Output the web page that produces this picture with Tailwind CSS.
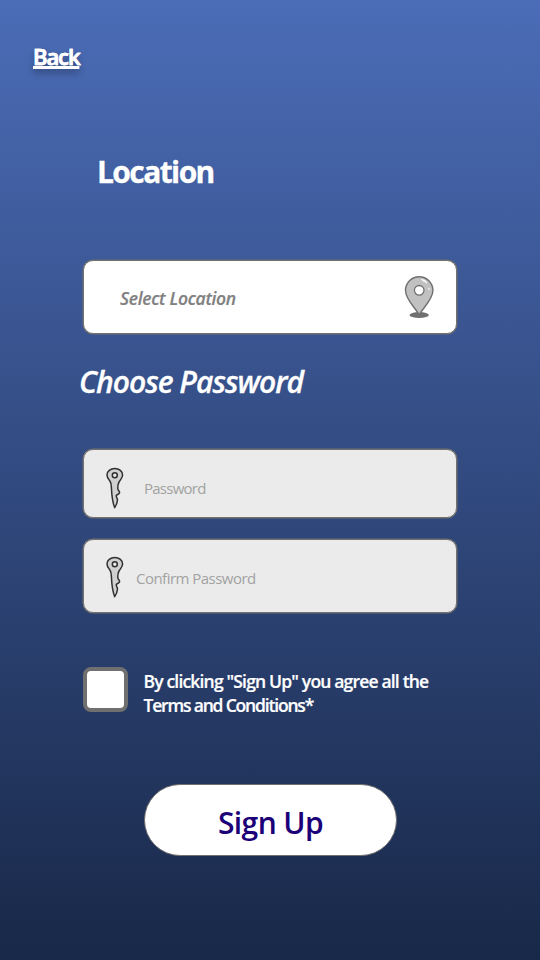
<!DOCTYPE html>
<html lang="en">
<head>
<meta charset="utf-8">
<title>Sign Up</title>
<script src="https://cdn.jsdelivr.net/npm/@tailwindcss/browser@4"></script>
</head>
<body class="font-['Open_Sans','Noto_Sans',sans-serif]">
<svg class="hidden">
  <symbol id="key" viewBox="0 0 18 42">
    <path d="M8.800 1.600C4.400 1.600 1 4.400 1 8c0 2.600 1.600 4.200 2.900 6 1.400 1.900 1.400 3.500 1.500 6.500.3 7.500 1.200 15 3.300 20.200 1.500-2.200 2.600-5.200 2.800-7.700.1-1.800-1.600-3-1.300-4.300.3-1.300 3.200-1.200 3.400-3 .1-1.600-1.800-2.300-1.800-4.200 0-3.200-.1-4.600 1.500-7 1.500-2.300 3.300-3.700 3.300-6.500 0-3.600-3.400-6.400-7.800-6.400Z" fill="#d0d0d0" stroke="#303030" stroke-width="1.500" stroke-linejoin="round"/>
    <circle cx="8.800" cy="8.300" r="2.500" fill="#e8e8e8" stroke="#303030" stroke-width="1.500"/>
  </symbol>
</svg>
<main class="flex h-[960px] w-[540px] flex-col bg-[linear-gradient(to_bottom,#4b6cb7,#182848)] text-white">
  <a class="mt-[41px] ml-[33px] flex h-[30px] w-[48px] items-center text-[22px] font-semibold tracking-[-1.100px] whitespace-nowrap underline decoration-[2.500px] underline-offset-1 [-webkit-text-stroke:0.6px_white] [text-shadow:0_4px_7px_#0005]">Back</a>
  <h1 class="mt-[80px] ml-[97px] flex h-10 items-center text-[30px] font-bold tracking-[-1.600px] whitespace-nowrap [-webkit-text-stroke:0.3px_white]">Location</h1>
  <div class="mt-[69px] ml-[83px] flex h-[74px] w-[374px] items-center justify-between rounded-[10px] border border-[#707070] bg-white pr-[22px] pl-[36px] shadow-[0_0_0_0.5px_#707070]">
    <span class="pt-[3px] text-[17.500px] font-semibold tracking-[-0.3px] whitespace-nowrap text-[#808080] italic [-webkit-text-stroke:0.2px_#808080]">Select Location</span>
    <svg class="h-[44px] w-[30px]" viewBox="0 0 30 44">
      <ellipse cx="15.200" cy="40" rx="9.700" ry="3" fill="#707070"/>
      <path d="M15.200 40C13 34.500 1.500 25 1.500 15.500a13.700 13.700 0 0 1 27.400 0C28.900 25 17.400 34.500 15.200 40Z" fill="#c1c1c1" stroke="#707070" stroke-width="1.400"/>
      <circle cx="15.200" cy="15.300" r="4.800" fill="#fff" stroke="#707070" stroke-width="1.300"/>
      <path d="M17.500 4.500c2.500.2 4.700 1.500 5.500 3.500-2-1.200-3.800-1.800-5.500-3.500Z" fill="#fff5f5" stroke="#fff5f5"/>
      <circle cx="25" cy="14" r="1" fill="#f0e8e8"/>
    </svg>
  </div>
  <h2 class="mt-[27px] ml-[79px] flex h-10 items-center text-[30px] font-semibold tracking-[-1px] whitespace-nowrap italic [-webkit-text-stroke:0.3px_white]">Choose Password</h2>
  <div class="mt-[48px] ml-[83px] flex h-[69px] w-[374px] items-center rounded-[10px] border border-[#707070] bg-[#ebebeb] pl-[22px] shadow-[0_0_0_0.5px_#707070]">
    <svg class="mt-[9px] h-[42px] w-[18px]"><use href="#key"/></svg>
    <span class="mt-[9px] ml-[20px] text-[15px] tracking-[-0.750px] whitespace-nowrap text-[#a2a2a2]">Password</span>
  </div>
  <div class="mt-[21px] ml-[83px] flex h-[74px] w-[374px] items-center rounded-[10px] border border-[#707070] bg-[#ebebeb] pl-[22px] shadow-[0_0_0_0.5px_#707070]">
    <svg class="mt-px h-[42px] w-[18px]"><use href="#key"/></svg>
    <span class="mt-[4px] ml-[12px] text-[15px] tracking-[-0.520px] whitespace-nowrap text-[#a2a2a2]">Confirm Password</span>
  </div>
  <div class="mt-[54px] ml-[82.500px] flex h-[50px] items-start gap-[16px]">
    <span class="h-[45px] w-[45px] rounded-[8px] border-4 border-[#707070] bg-white"></span>
    <div class="mt-[2px] text-[17.500px] leading-[24px] font-semibold whitespace-nowrap [-webkit-text-stroke:0.2px_white]">
      <p class="tracking-[-0.820px]">By clicking "Sign Up" you agree all the</p>
      <p class="tracking-[-1.180px]">Terms and Conditions*</p>
    </div>
  </div>
  <button class="mt-[67px] ml-[144px] flex h-[72px] w-[253px] items-center justify-center rounded-full border border-[#707070] bg-white pt-[4px] text-[30px] font-semibold tracking-[-0.6px] whitespace-nowrap text-[#1b0078]">Sign Up</button>
</main>
</body>
</html>
